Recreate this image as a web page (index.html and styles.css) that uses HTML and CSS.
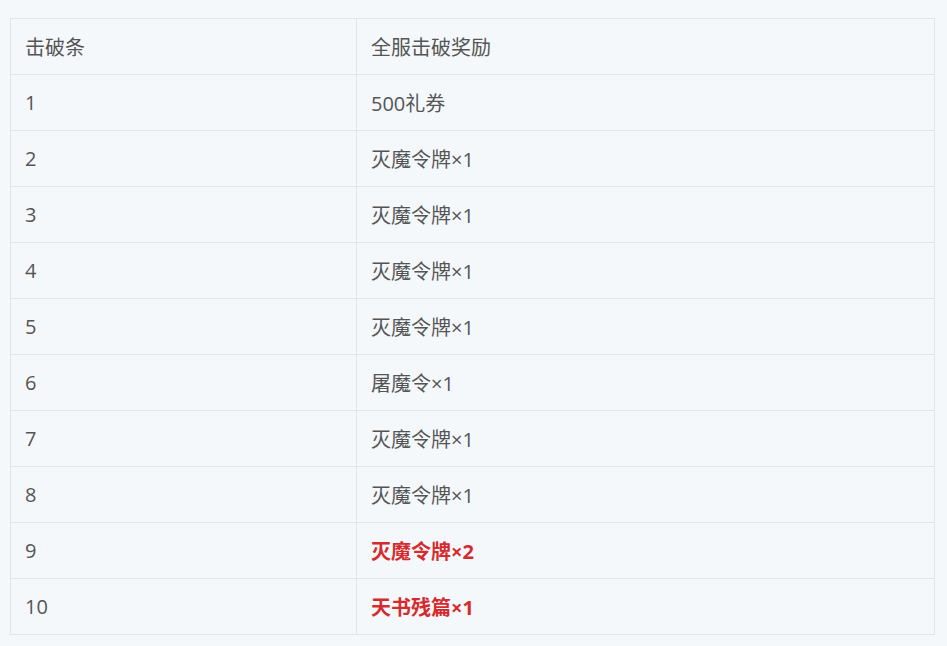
FILE: index.html
```html
<!DOCTYPE html>
<html lang="zh">
<head>
<meta charset="utf-8">
<link rel="stylesheet" href="styles.css">
</head>
<body>
<div class="wrap">
<table class="reward">
<tr><td class="c1">击破条</td><td>全服击破奖励</td></tr>
<tr><td class="c1">1</td><td>500礼券</td></tr>
<tr><td class="c1">2</td><td>灭魔令牌×1</td></tr>
<tr><td class="c1">3</td><td>灭魔令牌×1</td></tr>
<tr><td class="c1">4</td><td>灭魔令牌×1</td></tr>
<tr><td class="c1">5</td><td>灭魔令牌×1</td></tr>
<tr><td class="c1">6</td><td>屠魔令×1</td></tr>
<tr><td class="c1">7</td><td>灭魔令牌×1</td></tr>
<tr><td class="c1">8</td><td>灭魔令牌×1</td></tr>
<tr><td class="c1">9</td><td><span class="hl">灭魔令牌×2</span></td></tr>
<tr><td class="c1">10</td><td><span class="hl">天书残篇×1</span></td></tr>
</table>
</div>
</body>
</html>
```
FILE: styles.css
```css
html, body {
  margin: 0;
  padding: 0;
  background: #f4f8fb;
}
.wrap {
  padding: 18px 12px 0 10px;
}
.reward {
  width: 100%;
  border-collapse: collapse;
  font-family: "Open Sans", "Noto Sans CJK SC", sans-serif;
  font-size: 20px;
  color: #555555;
}
.reward td {
  border: 1px solid #e4e4e4;
  height: 56px;
  padding: 0 14px;
  box-sizing: border-box;
  vertical-align: middle;
}
.reward .c1 {
  width: 346px;
}
.hl {
  color: #d52b2f;
  font-weight: 700;
}
```
